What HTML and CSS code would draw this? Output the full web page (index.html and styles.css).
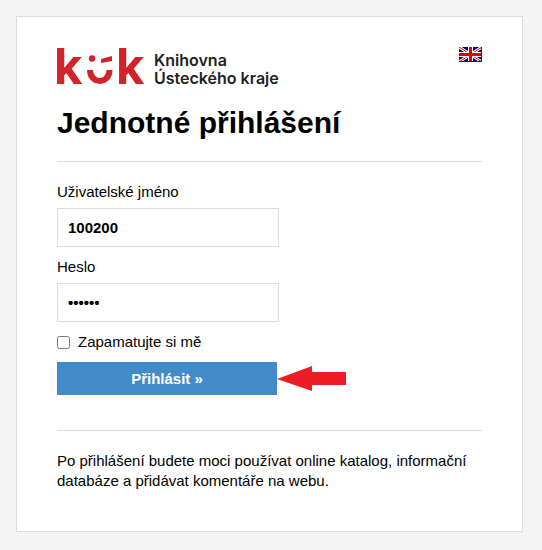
FILE: index.html
```html
<!DOCTYPE html>
<html lang="cs">
<head>
    <meta charset="UTF-8">
    <meta name="viewport" content="width=device-width, initial-scale=1.0">
    <title>Jednotné přihlášení</title>
    <link rel="stylesheet" href="styles.css">
</head>
<body>

<main class="login-box">
    <div class="top">
        <a class="logo" href="#">
            <svg class="logo-mark" viewBox="0 0 88 38" role="img" aria-label="kůk">
                <text class="logo-letter" x="-3" y="37">k</text>
                <text class="logo-letter" x="59" y="37">k</text>
                <circle cx="35" cy="11.500" r="3.200"/>
                <path d="M44 12l11-3v5l-11 2z"/>
                <path class="smile" d="M33 23c0 14.500 19.500 14.500 19.500 0"/>
            </svg>
            <span class="logo-name">
                <span>Knihovna</span>
                <span>Ústeckého kraje</span>
            </span>
        </a>
        <a class="lang" href="#" aria-label="English">
            <svg class="flag" viewBox="0 0 23 15">
                <path fill="#000080" d="M0 0h23v15H0z"/>
                <path stroke="#fff" stroke-width="3" d="M0 0l23 15M23 0L0 15"/>
                <path stroke="#e00000" stroke-width="1" d="M0 0l23 15M23 0L0 15"/>
                <path stroke="#fff" stroke-width="5" d="M11.500 0v15M0 7.500h23"/>
                <path stroke="#e00000" stroke-width="3" d="M11.500 0v15M0 7.500h23"/>
                <path fill="none" stroke="#222" d="M0 14.500h22.500V0"/>
            </svg>
        </a>
    </div>

    <h1>Jednotné přihlášení</h1>

    <form class="login-form">
        <label for="username">Uživatelské jméno</label>
        <input class="field" type="text" id="username" value="100200">
        <label for="password">Heslo</label>
        <input class="field" type="password" id="password" value="heslo1">
        <div class="remember">
            <input type="checkbox" id="remember">
            <label for="remember">Zapamatujte si mě</label>
        </div>
        <div class="submit-row">
            <button class="submit" type="button">Přihlásit »</button>
            <svg class="arrow" viewBox="0 0 69 26">
                <path d="M0 13L35 0v6h34v13H35v6z"/>
            </svg>
        </div>
    </form>

    <p class="info">Po přihlášení budete moci používat online katalog, informační databáze a přidávat komentáře na webu.</p>
</main>

</body>
</html>
```
FILE: styles.css
```css
* {
    box-sizing: border-box;
}
body {
    font-family: "Liberation Sans", Arial, sans-serif;
    font-size: 15px;
    line-height: 20px;
    background-color: #f4f4f4;
    color: #000;
    margin: 0;
    padding: 16px 19px 16px 16px;
}
.login-box {
    background-color: #fff;
    border: 1px solid #ddd;
    padding: 30px 40px 40px;
}
.top {
    display: flex;
    justify-content: space-between;
    align-items: flex-start;
}
.logo {
    display: flex;
    gap: 9px;
    color: #222;
    text-decoration: none;
}
.logo-mark {
    width: 88px;
    height: 38px;
    fill: #d2232a;
    overflow: visible;
}
.logo-letter {
    font-family: Inter, sans-serif;
    font-size: 49px;
    font-weight: 700;
}
.smile {
    fill: none;
    stroke: #d2232a;
    stroke-width: 6px;
}
.logo-name {
    display: flex;
    flex-direction: column;
    font-family: Inter, sans-serif;
    font-size: 16px;
    font-weight: 600;
    line-height: 18px;
    padding-top: 4px;
}
.flag {
    display: block;
    width: 23px;
    height: 15px;
}
h1 {
    font-size: 30px;
    line-height: 36px;
    margin: 18px 0 20px;
    padding-bottom: 20px;
    border-bottom: 1px solid #ddd;
}
.login-form > label {
    display: block;
    margin-bottom: 6px;
}
.field {
    display: block;
    width: 222px;
    height: 39px;
    margin-bottom: 10px;
    padding: 0 10px;
    border: 1px solid #ddd;
    font: bold 15px "Liberation Sans", Arial, sans-serif;
}
.remember {
    display: flex;
    align-items: center;
    gap: 8px;
    margin-bottom: 10px;
}
.remember input {
    width: 13px;
    height: 13px;
    margin: 0;
}
.submit-row {
    display: flex;
    align-items: center;
}
.submit {
    width: 220px;
    height: 33px;
    border: 0;
    background-color: #428bca;
    color: #fff;
    font: bold 15px "Liberation Sans", Arial, sans-serif;
    cursor: pointer;
}
.arrow {
    width: 69px;
    height: 26px;
    fill: #ed1c24;
}
.info {
    margin: 35px 0 0;
    padding-top: 20px;
    border-top: 1px solid #ddd;
}
```
